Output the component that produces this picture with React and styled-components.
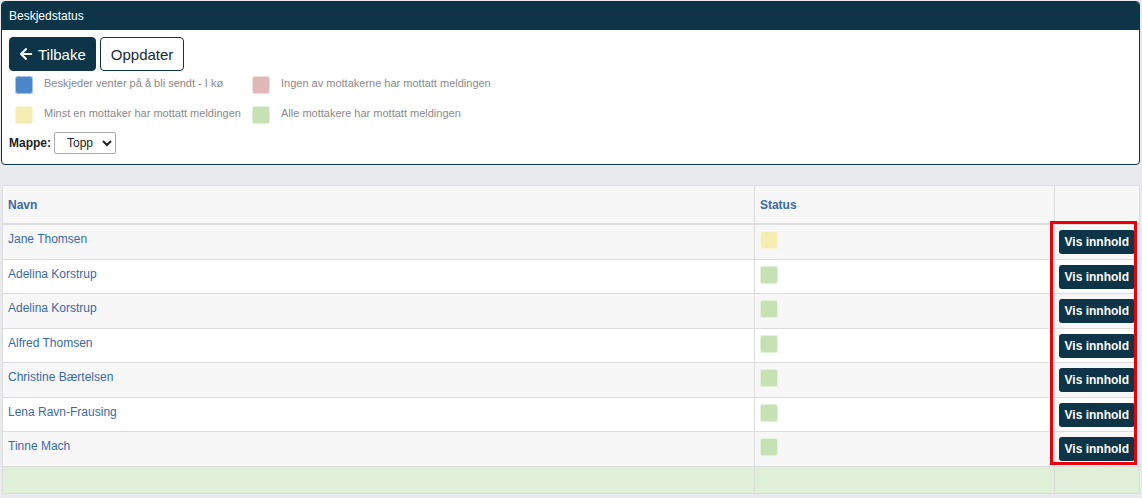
import React from "react";
import styled, { createGlobalStyle } from "styled-components";
import { FaArrowLeft } from "react-icons/fa";

const GlobalStyle = createGlobalStyle`
  html, body {
    margin: 0;
    padding: 0;
    background: #e9eaed;
    font-family: "Liberation Sans", Arial, sans-serif;
  }
`;

const Page = styled.div`
  padding: 1px 2px 0 1px;
  border-top: 1px solid #b9babd;
  margin-top: -1px;
`;

const Panel = styled.div`
  background: #fff;
  border: 1px solid #0d3547;
  border-radius: 4px;
  overflow: hidden;
`;

const PanelHeader = styled.div`
  background: #0d3547;
  color: #fff;
  font-size: 12px;
  height: 28px;
  line-height: 28px;
  padding: 0 7px;
`;

const PanelBody = styled.div`
  padding: 7px 7px 10px;
`;

const Toolbar = styled.div`
  display: flex;
  gap: 4px;
`;

const Button = styled.button`
  display: flex;
  align-items: center;
  gap: 5px;
  height: 34px;
  padding: 0 ${(p) => (p.$primary ? "9px" : "10px")};
  font-family: "Liberation Sans", Arial, sans-serif;
  font-size: 15px;
  border-radius: 4px;
  border: 1px solid #0d3547;
  background: ${(p) => (p.$primary ? "#0d3547" : "#fff")};
  color: ${(p) => (p.$primary ? "#fff" : "#1b2a33")};
  white-space: nowrap;
  cursor: pointer;
`;

const Legend = styled.div`
  display: grid;
  grid-template-columns: 237px auto;
  grid-auto-rows: 19px;
  row-gap: 11px;
  margin: 4px 0 0 6px;
  width: 520px;
`;

const LegendItem = styled.div`
  display: flex;
  align-items: flex-start;
  gap: 11px;
  font-size: 11px;
  color: #8a8a8a;
  padding-top: 1px;
  line-height: 14px;
`;

const Swatch = styled.span`
  display: block;
  flex: none;
  width: 18px;
  height: 18px;
  border-radius: 3px;
  background: ${(p) => p.$color};
  box-shadow: inset 0 0 0 1px rgba(255, 255, 255, 0.5);
`;

const MappeRow = styled.div`
  display: flex;
  align-items: center;
  gap: 3px;
  margin-top: 8px;
  font-size: 12px;
  font-weight: bold;
  color: #222;
`;

const Select = styled.select`
  height: 22px;
  width: 62px;
  font-family: "Liberation Sans", Arial, sans-serif;
  font-size: 12px;
  border: 1px solid #aaa;
  border-radius: 2px;
  background: #fff;
  padding: 0 4px 0 8px;
  color: #222;
`;

const TableWrap = styled.div`
  position: relative;
  margin: 20px 0 0 1px;
`;

const Table = styled.table`
  width: 100%;
  border-collapse: collapse;
  background: #fff;
  border: 1px solid #ddd;
  font-size: 12px;
`;

const Th = styled.th`
  text-align: left;
  font-weight: bold;
  color: #3b6aa6;
  height: 37px;
  padding: 0 5px;
  background: #f7f7f7;
  border-right: 1px solid #ddd;
  border-bottom: 2px solid #ddd;
  width: ${(p) => p.$w || "auto"};
`;

const Tr = styled.tr`
  background: ${(p) => (p.$odd ? "#f7f7f7" : "#fff")};
  border-top: 1px solid #ddd;
  height: ${(p) => (p.$odd ? "35px" : "34px")};
`;

const Td = styled.td`
  vertical-align: top;
  padding: ${(p) => p.$pad || "7px 5px 0"};
  border-right: 1px solid #ddd;
`;

const NameLink = styled.a`
  color: #3b6aa6;
  text-decoration: none;
`;

const ViewButton = styled.button`
  height: 24px;
  padding: 0 6px;
  border: none;
  border-radius: 3px;
  background: #0d3547;
  color: #fff;
  font-family: "Liberation Sans", Arial, sans-serif;
  font-size: 12px;
  font-weight: bold;
  white-space: nowrap;
`;

const FooterRow = styled.tr`
  background: #dfefd8;
  border-top: 1px solid #ddd;
`;

const FooterCell = styled.td`
  height: 26px;
  padding: 0;
  border-right: 1px solid #ddd;
`;

const Highlight = styled.div`
  position: absolute;
  left: 1048px;
  top: 36px;
  width: 81px;
  height: 238px;
  border: 3px solid #e8000b;
  pointer-events: none;
`;

const legend = [
  { color: "#4a86c8", text: "Beskjeder venter på å bli sendt - I kø" },
  { color: "#e0b8b8", text: "Ingen av mottakerne har mottatt meldingen" },
  { color: "#f5ecb2", text: "Minst en mottaker har mottatt meldingen" },
  { color: "#c6e1b4", text: "Alle mottakere har mottatt meldingen" },
];

const rows = [
  { name: "Jane Thomsen", color: "#f5ecb2" },
  { name: "Adelina Korstrup", color: "#c6e1b4" },
  { name: "Adelina Korstrup", color: "#c6e1b4" },
  { name: "Alfred Thomsen", color: "#c6e1b4" },
  { name: "Christine Bærtelsen", color: "#c6e1b4" },
  { name: "Lena Ravn-Frausing", color: "#c6e1b4" },
  { name: "Tinne Mach", color: "#c6e1b4" },
];

export default function App() {
  return (
    <>
      <GlobalStyle />
      <Page>
        <Panel>
          <PanelHeader>Beskjedstatus</PanelHeader>
          <PanelBody>
            <Toolbar>
              <Button $primary>
                <FaArrowLeft size={14} />
                Tilbake
              </Button>
              <Button>Oppdater</Button>
            </Toolbar>
            <Legend>
              {legend.map((l, i) => (
                <LegendItem key={i}>
                  <Swatch $color={l.color} />
                  {l.text}
                </LegendItem>
              ))}
            </Legend>
            <MappeRow>
              Mappe:
              <Select defaultValue="Topp">
                <option>Topp</option>
              </Select>
            </MappeRow>
          </PanelBody>
        </Panel>

        <TableWrap>
          <Table>
            <thead>
              <tr>
                <Th $w="742px">Navn</Th>
                <Th $w="289px">Status</Th>
                <Th />
              </tr>
            </thead>
            <tbody>
              {rows.map((r, i) => (
                <Tr key={i} $odd={i % 2 === 0}>
                  <Td>
                    <NameLink href="#">{r.name}</NameLink>
                  </Td>
                  <Td $pad="6px 5px 0">
                    <Swatch $color={r.color} />
                  </Td>
                  <Td $pad="5px 4px 0">
                    <ViewButton>Vis innhold</ViewButton>
                  </Td>
                </Tr>
              ))}
              <FooterRow>
                <FooterCell />
                <FooterCell />
                <FooterCell />
              </FooterRow>
            </tbody>
          </Table>
          <Highlight />
        </TableWrap>
      </Page>
    </>
  );
}
